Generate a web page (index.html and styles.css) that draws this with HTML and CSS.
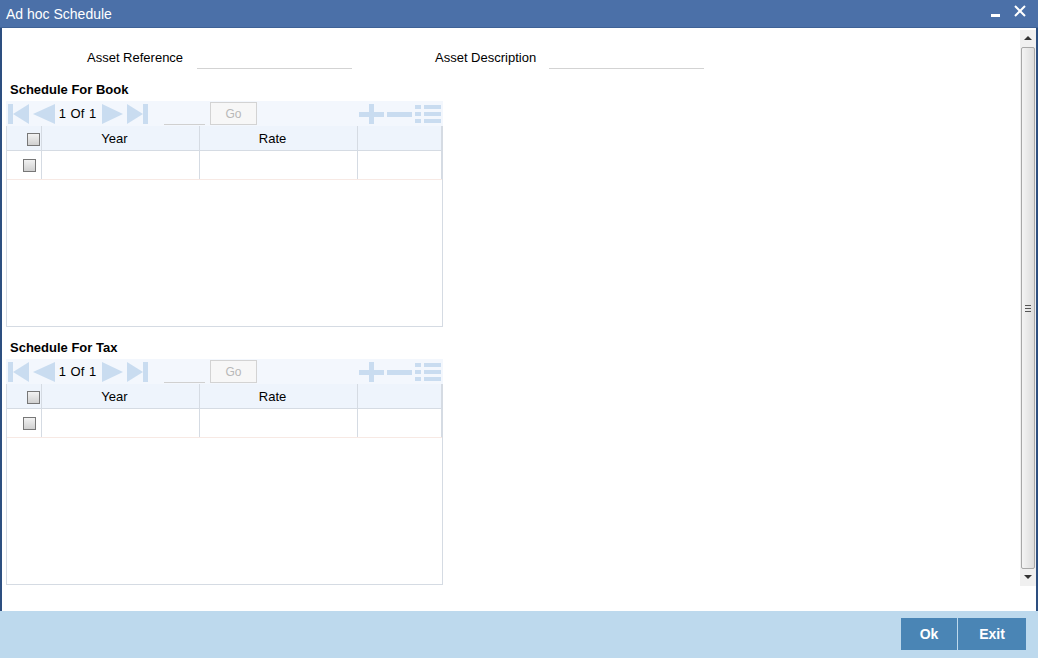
FILE: index.html
```html
<!DOCTYPE html>
<html>
<head>
<meta charset="utf-8">
<link rel="stylesheet" href="styles.css">
</head>
<body>
<div class="window">
  <div class="titlebar">
    <span class="title">Ad hoc Schedule</span>
    <span class="winbtns">
      <span class="minbtn"></span>
      <svg class="closebtn" width="12" height="12" viewBox="0 0 12 12"><path d="M1 1L11 11M11 1L1 11" stroke="#fff" stroke-width="2"/></svg>
    </span>
  </div>
  <div class="body">
    <div class="content">
      <div class="fields">
        <label class="lbl lbl1">Asset Reference</label>
        <span class="inp"></span>
        <label class="lbl lbl2">Asset Description</label>
        <span class="inp"></span>
      </div>

      <div class="section">
        <div class="sectitle">Schedule For Book</div>
        <div class="toolbar">
          <div class="nav">
            <svg width="21" height="20" viewBox="0 0 21 20"><rect x="0" y="0" width="5" height="20" fill="#c9dcf0"/><polygon points="21,0 21,20 5,10" fill="#c9dcf0"/></svg>
            <svg class="ml4" width="22" height="20" viewBox="0 0 22 20"><polygon points="22,0 22,20 0,10" fill="#c9dcf0"/></svg>
            <span class="pg">1 Of 1</span>
            <svg width="21" height="20" viewBox="0 0 21 20"><polygon points="0,0 0,20 21,10" fill="#c9dcf0"/></svg>
            <svg class="ml4" width="21" height="20" viewBox="0 0 21 20"><polygon points="0,0 0,20 16,10" fill="#c9dcf0"/><rect x="16" y="0" width="5" height="20" fill="#c9dcf0"/></svg>
            <span class="pginp"></span>
            <span class="gobtn">Go</span>
          </div>
          <div class="acts">
            <svg width="25" height="20" viewBox="0 0 25 20"><rect x="0" y="8" width="25" height="5" fill="#c9dcf0"/><rect x="10" y="0" width="5" height="20" fill="#c9dcf0"/></svg>
            <svg width="25" height="20" viewBox="0 0 25 20"><rect x="0" y="8" width="25" height="5" fill="#c9dcf0"/></svg>
            <svg width="26" height="20" viewBox="0 0 26 20"><rect x="0" y="1" width="6" height="4" fill="#c9dcf0"/><rect x="9" y="1" width="17" height="4" fill="#c9dcf0"/><rect x="0" y="8" width="6" height="4" fill="#c9dcf0"/><rect x="9" y="8" width="17" height="4" fill="#c9dcf0"/><rect x="0" y="15" width="6" height="4" fill="#c9dcf0"/><rect x="9" y="15" width="17" height="4" fill="#c9dcf0"/></svg>
          </div>
        </div>
        <div class="grid">
          <div class="row head">
            <div class="c c0"><span class="cb"></span></div>
            <div class="c c1">Year</div>
            <div class="c c2">Rate</div>
            <div class="c c3"></div>
          </div>
          <div class="row data">
            <div class="c c0"><span class="cb"></span></div>
            <div class="c c1"></div>
            <div class="c c2"></div>
            <div class="c c3"></div>
          </div>
        </div>
      </div>

      <div class="section tax">
        <div class="sectitle">Schedule For Tax</div>
        <div class="toolbar">
          <div class="nav">
            <svg width="21" height="20" viewBox="0 0 21 20"><rect x="0" y="0" width="5" height="20" fill="#c9dcf0"/><polygon points="21,0 21,20 5,10" fill="#c9dcf0"/></svg>
            <svg class="ml4" width="22" height="20" viewBox="0 0 22 20"><polygon points="22,0 22,20 0,10" fill="#c9dcf0"/></svg>
            <span class="pg">1 Of 1</span>
            <svg width="21" height="20" viewBox="0 0 21 20"><polygon points="0,0 0,20 21,10" fill="#c9dcf0"/></svg>
            <svg class="ml4" width="21" height="20" viewBox="0 0 21 20"><polygon points="0,0 0,20 16,10" fill="#c9dcf0"/><rect x="16" y="0" width="5" height="20" fill="#c9dcf0"/></svg>
            <span class="pginp"></span>
            <span class="gobtn">Go</span>
          </div>
          <div class="acts">
            <svg width="25" height="20" viewBox="0 0 25 20"><rect x="0" y="8" width="25" height="5" fill="#c9dcf0"/><rect x="10" y="0" width="5" height="20" fill="#c9dcf0"/></svg>
            <svg width="25" height="20" viewBox="0 0 25 20"><rect x="0" y="8" width="25" height="5" fill="#c9dcf0"/></svg>
            <svg width="26" height="20" viewBox="0 0 26 20"><rect x="0" y="1" width="6" height="4" fill="#c9dcf0"/><rect x="9" y="1" width="17" height="4" fill="#c9dcf0"/><rect x="0" y="8" width="6" height="4" fill="#c9dcf0"/><rect x="9" y="8" width="17" height="4" fill="#c9dcf0"/><rect x="0" y="15" width="6" height="4" fill="#c9dcf0"/><rect x="9" y="15" width="17" height="4" fill="#c9dcf0"/></svg>
          </div>
        </div>
        <div class="grid">
          <div class="row head">
            <div class="c c0"><span class="cb"></span></div>
            <div class="c c1">Year</div>
            <div class="c c2">Rate</div>
            <div class="c c3"></div>
          </div>
          <div class="row data">
            <div class="c c0"><span class="cb"></span></div>
            <div class="c c1"></div>
            <div class="c c2"></div>
            <div class="c c3"></div>
          </div>
        </div>
      </div>
    </div>
    <div class="scrollbar">
      <div class="arrow up"></div>
      <div class="thumb"><span class="grip"></span></div>
      <div class="arrow down"></div>
    </div>
  </div>
  <div class="footer">
    <span class="btn ok">Ok</span>
    <span class="btn exit">Exit</span>
  </div>
</div>
</body>
</html>
```

FILE: styles.css
```css
* { box-sizing: border-box; }
html, body { margin: 0; padding: 0; }
body {
  width: 1038px;
  height: 658px;
  overflow: hidden;
  font-family: "Liberation Sans", Arial, sans-serif;
  font-size: 13px;
  color: #000;
  background: #fff;
}
.window {
  width: 1038px;
  height: 658px;
  display: flex;
  flex-direction: column;
  border-left: 2px solid #2d4f80;
  border-right: 2px solid #2d4f80;
}
.titlebar {
  height: 28px;
  background: #4b70a8;
  display: flex;
  align-items: center;
  justify-content: space-between;
  border-bottom: 1px solid #3f6296;
  margin-left: -2px;
  margin-right: -2px;
  padding: 0 12px 0 6px;
}
.title { color: #fff; font-size: 14px; }
.winbtns { display: flex; align-items: center; gap: 14px; }
.minbtn { width: 9px; height: 3px; background: #fff; margin-top: 4px; }
.closebtn { display: block; margin-top: -6px; }
.body {
  flex: 1;
  display: flex;
  min-height: 0;
}
.content {
  flex: 1;
  padding: 0 0 0 4px;
}
.fields {
  display: flex;
  align-items: flex-start;
  height: 55px;
  padding-top: 22px;
}
.lbl { line-height: 16px; }
.lbl1 { margin-left: 81px; width: 110px; }
.lbl2 { margin-left: 83px; width: 114px; }
.inp {
  width: 155px;
  height: 19px;
  border-bottom: 1px solid #d3d3d3;
}
.section { width: 437px; }
.sectitle {
  font-weight: bold;
  font-size: 13px;
  margin-left: 4px;
  height: 13px;
  line-height: 13px;
}
.toolbar {
  margin-top: 5px;
  height: 25px;
  background: #f3f7fd;
  display: flex;
  justify-content: space-between;
  align-items: center;
  padding: 0 2px;
}
.nav { display: flex; align-items: center; }
.nav svg { display: block; }
.ml4 { margin-left: 4px; }
.pg {
  margin: 0 5px 0 3px;
  width: 39px;
  font-size: 13px;
  text-align: center;
  white-space: nowrap;
  word-spacing: 1px;
}
.pginp {
  width: 41px;
  height: 22px;
  border-bottom: 1px solid #d0d0d0;
  margin-left: 16px;
}
.gobtn {
  width: 47px;
  height: 23px;
  border: 1px solid #d3d3d3;
  background: #f7f7f7;
  color: #b8b8b8;
  font-size: 12px;
  display: flex;
  align-items: center;
  justify-content: center;
  margin-left: 5px;
}
.acts { display: flex; align-items: center; gap: 3px; }
.acts svg { display: block; }
.grid {
  height: 201px;
  border: 1px solid #d5dbe3;
  border-top: none;
}
.row { display: flex; }
.row.head { height: 25px; background: #eef4fc; border-bottom: 1px solid #d5dbe3; }
.row.data { height: 29px; border-bottom: 1px solid #f7e9e4; }
.c {
  display: flex;
  align-items: center;
  justify-content: center;
  border-right: 1px solid #d5dbe3;
}
.c0 { width: 35px; justify-content: flex-end; }
.c1, .c2 { width: 158px; padding-right: 12px; }
.c3 { width: 84px; }
.cb {
  width: 13px;
  height: 13px;
  border: 1px solid #777;
  background: linear-gradient(#f2f2f2, #d0d0d0);
}
.head .cb { margin-top: 3px; margin-right: 1px; }
.data .cb { margin-right: 5px; }
.section.tax { margin-top: 14px; }
.scrollbar {
  width: 16px;
  margin: 2px 0 25px 0;
  background: #f0f0f0;
  display: flex;
  flex-direction: column;
}
.arrow { height: 17px; position: relative; }
.arrow::after {
  content: "";
  position: absolute;
  left: 4px;
  border-left: 4px solid transparent;
  border-right: 4px solid transparent;
}
.arrow.up::after { top: 6px; border-bottom: 4px solid #333; }
.arrow.down::after { top: 6px; border-top: 4px solid #333; }
.thumb {
  flex: 1;
  margin: 0 1px;
  border: 1px solid #a8a8a8;
  border-radius: 2px;
  background: linear-gradient(to right, #f4f4f4, #dcdcdc);
  display: flex;
  align-items: center;
  justify-content: center;
}
.grip {
  width: 6px;
  height: 7px;
  background: repeating-linear-gradient(#555 0 1px, transparent 1px 3px);
}
.footer {
  height: 47px;
  background: #bdd9ed;
  display: flex;
  justify-content: flex-end;
  align-items: flex-start;
  margin-left: -2px;
  margin-right: -2px;
  padding: 7px 12px 0 0;
}
.btn {
  height: 32px;
  background: #4a85b5;
  color: #fff;
  font-weight: bold;
  font-size: 14px;
  display: flex;
  align-items: center;
  justify-content: center;
}
.ok { width: 57px; border-right: 1px solid #bdd9ed; }
.exit { width: 68px; }
```
